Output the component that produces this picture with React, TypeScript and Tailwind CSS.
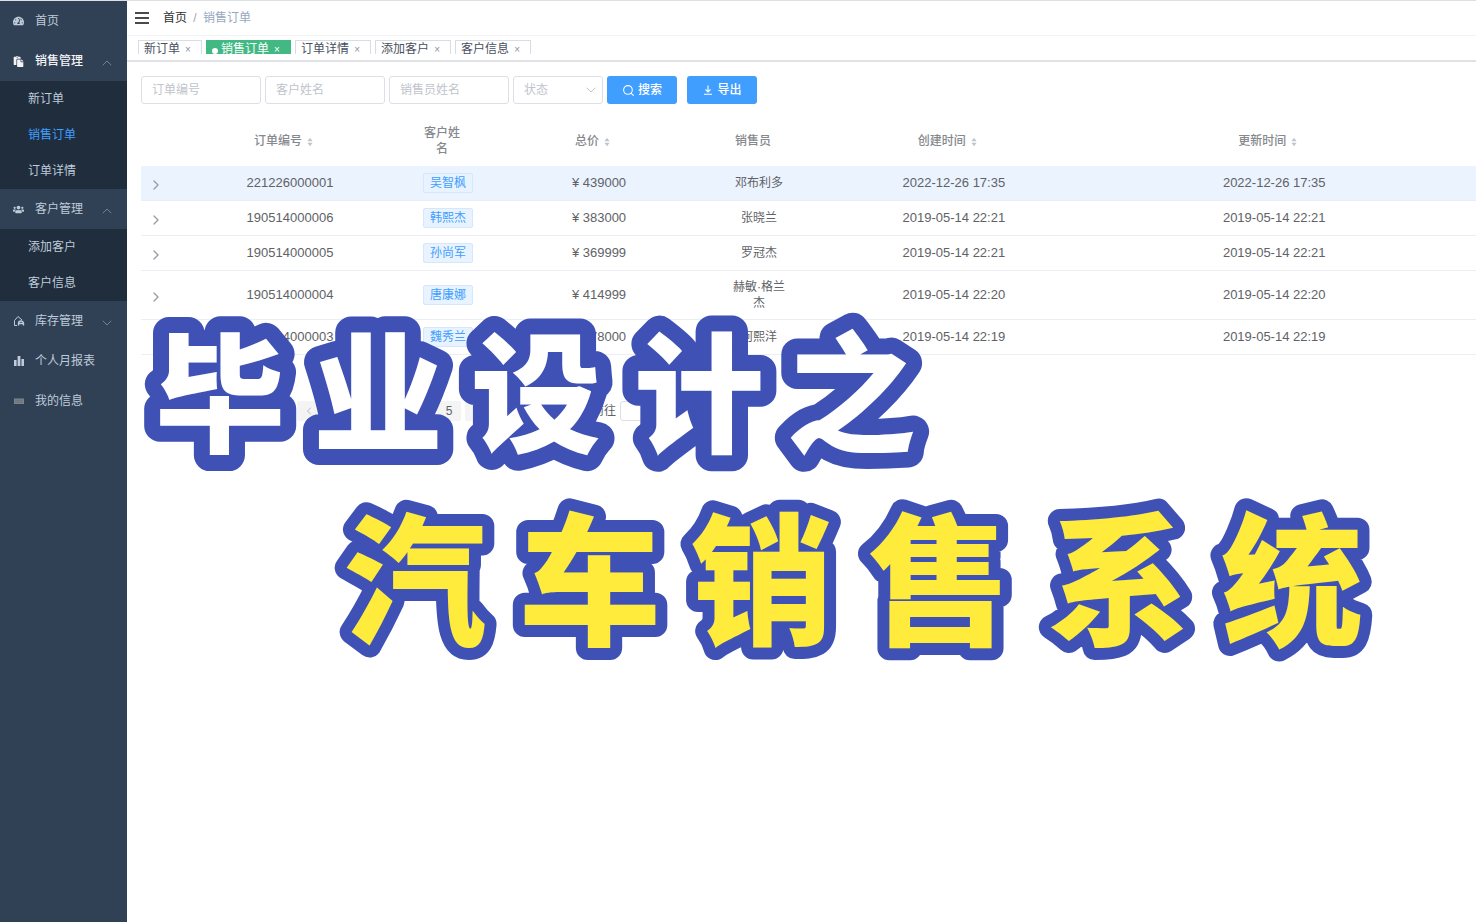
import React, { useState } from "react";
import { FaTachometerAlt, FaPaste, FaUsers } from "react-icons/fa";
import { ChevronDown, ChevronLeft, ChevronRight, ChevronUp, Search } from "lucide-react";

interface MenuItem {
  label: string;
  icon: React.ReactNode;
  open?: boolean;
  bright?: boolean;
  children?: string[];
}

interface Order {
  id: string;
  customer: string;
  price: string;
  seller: string;
  created: string;
  updated: string;
}

const HouseIcon = () => (
  <svg viewBox="0 0 12 12" className="w-3 h-3" fill="none" stroke="currentColor" strokeWidth="1">
    <path d="M1.5 10.5V5.5L5 1.5l4 3.5M1.5 10.5H4" />
    <path d="M5.5 10.5V8.5a2.5 2.5 0 0 1 5 0v2M5.5 8.5h5" strokeWidth="1.4" />
  </svg>
);

const BarsIcon = () => (
  <svg viewBox="0 0 12 12" className="w-3 h-3" fill="currentColor">
    <path d="M1 5h2.6v6H1zM4.6 1h2.8v10H4.6zM8.4 4H11v7H8.4z" />
  </svg>
);

const CardIcon = () => (
  <svg viewBox="0 0 12 12" className="w-3 h-3" fill="#7d858c">
    <path d="M1 3.5h10v5.5H1z" />
    <path d="M2 5.2h8M2 7.2h8" stroke="#5b6672" strokeWidth="0.7" />
  </svg>
);

const DownloadIcon = () => (
  <svg viewBox="0 0 12 12" className="w-3 h-3" fill="none" stroke="currentColor" strokeWidth="1.1">
    <path d="M6 1.5v6.5M3.5 5.5L6 8l2.5-2.5M2 10.3h8" />
  </svg>
);

const SortIcon = () => (
  <svg viewBox="0 0 8 10" className="w-2 h-[10px] inline-block ml-1" fill="#c0c4cc">
    <path d="M4 0.8L6.6 4.2H1.4zM4 9.2L1.4 5.8h5.2z" />
  </svg>
);

const menu: MenuItem[] = [
  { label: "首页", icon: <FaTachometerAlt className="w-[11px] h-[10px]" /> },
  {
    label: "销售管理",
    icon: <FaPaste className="w-[11px] h-[11px]" />,
    open: true,
    bright: true,
    children: ["新订单", "销售订单", "订单详情"],
  },
  {
    label: "客户管理",
    icon: <FaUsers className="w-[11px] h-[11px]" />,
    open: true,
    children: ["添加客户", "客户信息"],
  },
  { label: "库存管理", icon: <HouseIcon />, open: false },
  { label: "个人月报表", icon: <BarsIcon /> },
  { label: "我的信息", icon: <CardIcon /> },
];

const tabs = ["新订单", "销售订单", "订单详情", "添加客户", "客户信息"];

const orders: Order[] = [
  { id: "221226000001", customer: "吴智枫", price: "439000", seller: "邓布利多", created: "2022-12-26 17:35", updated: "2022-12-26 17:35" },
  { id: "190514000006", customer: "韩熙杰", price: "383000", seller: "张晓兰", created: "2019-05-14 22:21", updated: "2019-05-14 22:21" },
  { id: "190514000005", customer: "孙尚军", price: "369999", seller: "罗冠杰", created: "2019-05-14 22:21", updated: "2019-05-14 22:21" },
  { id: "190514000004", customer: "唐康娜", price: "414999", seller: "赫敏·格兰杰", created: "2019-05-14 22:20", updated: "2019-05-14 22:20" },
  { id: "190514000003", customer: "魏秀兰", price: "378000", seller: "何熙洋", created: "2019-05-14 22:19", updated: "2019-05-14 22:19" },
];

const Sidebar = ({ current }: { current: string }) => (
  <nav className="w-[127px] shrink-0 bg-[#304156] text-[#bfcbd9]">
    {menu.map((item) => (
      <div key={item.label}>
        <a
          href="#"
          className={`flex items-center h-10 pl-[13px] pr-3 ${item.bright ? "text-[#f4f4f5] font-medium" : ""}`}
        >
          <span className="w-[22px] flex items-center">{item.icon}</span>
          <span className="flex-1 whitespace-nowrap">{item.label}</span>
          {item.open === true && <ChevronUp className="w-4 h-4 mt-1 text-[#74818f]" strokeWidth={1.5} />}
          {item.open === false && <ChevronDown className="w-4 h-4 mt-1 text-[#74818f]" strokeWidth={1.5} />}
        </a>
        {item.children && (
          <div className="bg-[#1f2d3d]">
            {item.children.map((child) => (
              <a
                key={child}
                href="#"
                className={`flex items-center h-9 pl-7 ${child === current ? "text-[#409eff]" : ""}`}
              >
                {child}
              </a>
            ))}
          </div>
        )}
      </div>
    ))}
  </nav>
);

const TabsBar = ({ current, onSelect }: { current: string; onSelect: (t: string) => void }) => (
  <div className="h-[27px] border-t border-[#f3f4f6] border-b-2 border-b-[#e1e2e5]">
    <div className="flex gap-1 h-[18px] pt-1 pl-[11px] overflow-hidden">
      {tabs.map((tab) => (
        <button
          key={tab}
          onClick={() => onSelect(tab)}
          className={`flex items-center shrink-0 h-[18px] px-[5px] border whitespace-nowrap ${
            tab === current
              ? "bg-[#42b983] border-[#42b983] text-white"
              : "bg-white border-[#d8dce5] text-[#495060]"
          }`}
        >
          {tab === current && <span className="w-[6px] h-[6px] mr-[3px] mt-1 rounded-full bg-white" />}
          {tab}
          <span className={`w-4 text-center text-[10px] ${tab === current ? "text-white" : "text-[#8d939c]"}`}>
            ×
          </span>
        </button>
      ))}
    </div>
  </div>
);

const fieldClass =
  "h-7 rounded-[3px] border border-[#dcdfe6] bg-white px-[10px] placeholder:text-[#c0c4cc] outline-none";
const buttonClass =
  "flex items-center justify-center gap-[3px] w-[70px] h-7 rounded-[3px] bg-[#409eff] text-white font-medium";

const Filters = () => (
  <div className="flex items-center gap-1">
    <input aria-label="订单编号" placeholder="订单编号" className={`${fieldClass} w-[120px]`} />
    <input aria-label="客户姓名" placeholder="客户姓名" className={`${fieldClass} w-[120px]`} />
    <input aria-label="销售员姓名" placeholder="销售员姓名" className={`${fieldClass} w-[120px]`} />
    <div className="relative">
      <select aria-label="状态" className={`${fieldClass} block w-[90px] appearance-none text-[#c0c4cc]`}>
        <option>状态</option>
      </select>
      <ChevronDown
        className="absolute right-1 top-[6px] w-4 h-4 text-[#c0c4cc] pointer-events-none"
        strokeWidth={1.5}
      />
    </div>
    <button className={buttonClass}>
      <Search className="w-[13px] h-[13px]" strokeWidth={2} />
      搜索
    </button>
    <button className={`${buttonClass} ml-[6px]`}>
      <DownloadIcon />
      导出
    </button>
  </div>
);

const thClass = "pl-3 pr-6 font-medium";
const tdClass = "py-[7px] border-b border-[#ebeef5]";
const numClass = "text-[13px] whitespace-nowrap";

const OrderTable = () => (
  <table className="w-full table-fixed border-separate border-spacing-0 text-center text-[#606266] leading-4">
    <colgroup>
      <col className="w-[30px]" />
      <col className="w-[238px]" />
      <col className="w-[78px]" />
      <col className="w-[224px]" />
      <col className="w-[96px]" />
      <col className="w-[22%]" />
      <col className="w-[26%]" />
      <col />
    </colgroup>
    <thead className="text-[#85888e]">
      <tr className="h-[50px]">
        <th />
        <th className={thClass}>订单编号<SortIcon /></th>
        <th className={thClass}>客户姓名</th>
        <th className={thClass}>总价<SortIcon /></th>
        <th className={thClass}>销售员</th>
        <th className={thClass}>创建时间<SortIcon /></th>
        <th className={thClass}>更新时间<SortIcon /></th>
        <th />
      </tr>
    </thead>
    <tbody>
      {orders.map((order, i) => (
        <tr key={order.id} className={i === 0 ? "bg-[#ebf3ff]" : ""}>
          <td className={tdClass}>
            <button aria-label="展开" className="block ml-[7px] mt-1">
              <ChevronRight className="w-4 h-4 text-[#9a9da3]" strokeWidth={2} />
            </button>
          </td>
          <td className={`${tdClass} ${numClass}`}>{order.id}</td>
          <td className={tdClass}>
            <span className="inline-flex items-center h-5 px-[6px] rounded-[2px] border border-[#d3e8fd] bg-[#e8f3ff] text-[#409eff] align-top whitespace-nowrap">
              {order.customer}
            </span>
          </td>
          <td className={`${tdClass} ${numClass}`}>¥ {order.price}</td>
          <td className="py-2 px-5 border-b border-[#ebeef5]">{order.seller}</td>
          <td className={`${tdClass} ${numClass}`}>{order.created}</td>
          <td className={`${tdClass} ${numClass}`}>{order.updated}</td>
          <td className={tdClass} />
        </tr>
      ))}
    </tbody>
  </table>
);

const pagerClass = "flex items-center justify-center w-6 h-5 rounded-[2px] bg-[#f4f4f5] text-[#606266]";

const Pagination = () => (
  <div className="flex items-center gap-1 mt-[46px] pl-[156px]">
    <button aria-label="上一页" className={pagerClass}>
      <ChevronLeft className="w-3 h-3 text-[#b4b8bf]" />
    </button>
    {[1, 2, 3, 4, 5].map((page) => (
      <button key={page} className={pagerClass}>{page}</button>
    ))}
    <button aria-label="下一页" className={pagerClass}>
      <ChevronRight className="w-3 h-3" />
    </button>
    <label className="flex items-center gap-1 ml-[99px] text-[#606266]">
      前往
      <input className="w-8 h-5 rounded-[3px] border border-[#dcdfe6] text-center" />
    </label>
  </div>
);

// Big outlined lettering laid over the page
const Headline = () => (
  <svg
    className="absolute left-0 top-0 w-full h-[700px] pointer-events-none font-black"
    stroke="#3f51b5"
    strokeLinejoin="round"
    paintOrder="stroke"
  >
    <text x="155 313 471 634 786" y="441" fontSize="130" fill="#fff" strokeWidth="32">
      毕业设计之
    </text>
    <text x="344 519 691 868 1048 1221" y="633" fontSize="142" fill="#ffeb3b" strokeWidth="24">
      汽车销售系统
    </text>
  </svg>
);

export default function App() {
  const [current, setCurrent] = useState("销售订单");

  return (
    <div className="relative flex min-h-screen overflow-hidden border-t border-[#dcdfe3] bg-white text-[12px] font-['Liberation_Sans','Noto_Sans_CJK_SC',sans-serif]">
      <Sidebar current="销售订单" />
      <main className="flex-1 min-w-0">
        <header className="flex items-center h-[34px] pl-2">
          <button aria-label="菜单" className="flex flex-col gap-[3px] w-[14px]">
            <span className="h-[2px] bg-[#4a4a4a]" />
            <span className="h-[2px] bg-[#4a4a4a]" />
            <span className="h-[2px] bg-[#4a4a4a]" />
          </button>
          <div className="flex items-center pl-[14px]">
            <a href="#" className="text-[#303133]">首页</a>
            <span className="w-4 text-center text-[#a0a5b0]">/</span>
            <span className="text-[#97a8be]">销售订单</span>
          </div>
        </header>
        <TabsBar current={current} onSelect={setCurrent} />
        <section className="pl-[14px] pt-[14px]">
          <Filters />
          <div className="pt-3">
            <OrderTable />
          </div>
          <Pagination />
        </section>
      </main>
      <Headline />
    </div>
  );
}
